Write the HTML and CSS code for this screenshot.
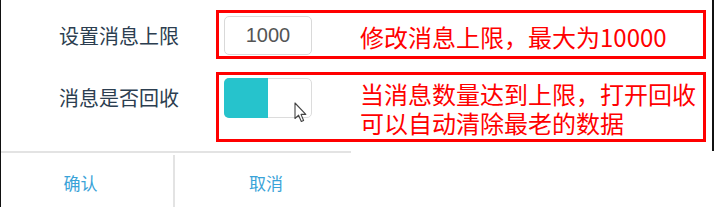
FILE: index.html
```html
<!DOCTYPE html>
<html>
<head>
<meta charset="utf-8">
<link rel="stylesheet" href="styles.css">
</head>
<body>
<div class="page">
  <div class="main">
    <div class="row row-limit">
      <div class="label">设置消息上限</div>
      <div class="note-box">
        <div class="input">1000</div>
        <div class="note note-one">修改消息上限，最大为10000</div>
      </div>
    </div>
    <div class="row row-recycle">
      <div class="label">消息是否回收</div>
      <div class="note-box tall">
        <div class="switch">
          <div class="switch-on"></div>
          <svg class="cursor" width="14" height="21" viewBox="0 0 14 21">
            <path d="M1 1 L1 16.5 L4.6 13.2 L7.3 19.5 L9.6 18.5 L7 12.4 L11.8 12.4 Z" fill="#fff" stroke="#444" stroke-width="1.1" stroke-linejoin="round"/>
          </svg>
        </div>
        <div class="note note-two">当消息数量达到上限，打开回收<br>可以自动清除最老的数据</div>
      </div>
    </div>
  </div>
  <div class="sep"></div>
  <div class="footer">
    <div class="btn btn-ok">确认</div>
    <div class="divider"></div>
    <div class="btn btn-cancel">取消</div>
  </div>
</div>
</body>
</html>
```
FILE: styles.css
```css
html, body {
  margin: 0;
  padding: 0;
  background: #fff;
}
.page {
  width: 713px;
  height: 207px;
  border-left: 1px solid #111;
  overflow: hidden;
  font-family: "Noto Sans CJK SC", "Noto Sans", sans-serif;
}
.main {
  height: 151px;
  box-sizing: border-box;
  padding-top: 10px;
  border-right: 2px solid #111;
  width: 713px;
}
.row {
  display: flex;
  align-items: flex-start;
}
.row-recycle {
  margin-top: 13px;
}
.label {
  width: 215px;
  box-sizing: border-box;
  padding-left: 58px;
  margin-top: 13px;
  font-size: 20px;
  line-height: 26px;
  color: #2c3e50;
  white-space: nowrap;
}
.note-box {
  width: 490px;
  height: 49px;
  box-sizing: border-box;
  border: 3px solid #ff0000;
  display: flex;
  align-items: flex-start;
  padding: 3px 0 0 5px;
}
.note-box.tall {
  height: 70px;
}
.input {
  width: 88px;
  height: 39px;
  box-sizing: border-box;
  border: 1px solid #d9d9d9;
  border-radius: 5px;
  font-family: "Liberation Sans", Arial, sans-serif;
  font-size: 20px;
  line-height: 37px;
  text-align: center;
  color: #555;
  flex-shrink: 0;
}
.switch {
  position: relative;
  width: 88px;
  height: 40px;
  box-sizing: border-box;
  border: 1px solid #dcdcdc;
  border-radius: 5px;
  flex-shrink: 0;
  display: flex;
}
.switch-on {
  width: 44px;
  margin: -1px 0 -1px -1px;
  background: #26c3cc;
  border-radius: 5px 0 0 5px;
}
.cursor {
  position: absolute;
  left: 69px;
  top: 23px;
}
.note {
  margin-left: 48px;
  color: #ff0000;
  font-size: 24px;
  line-height: 29px;
  white-space: nowrap;
}
.note-one {
  margin-top: 6px;
}
.note-two {
  margin-top: 1px;
}
.sep {
  width: 350px;
  height: 2px;
  background: #e3e3e3;
}
.footer {
  width: 350px;
  height: 54px;
  display: flex;
}
.btn {
  font-size: 17px;
  line-height: 22px;
  padding-top: 19px;
  color: #3aa3d8;
  text-align: center;
  box-sizing: border-box;
}
.btn-ok {
  width: 172px;
  padding-right: 13px;
}
.btn-cancel {
  width: 176px;
  padding-left: 6px;
}
.divider {
  width: 2px;
  margin-top: 2px;
  background: #e3e3e3;
}
```
